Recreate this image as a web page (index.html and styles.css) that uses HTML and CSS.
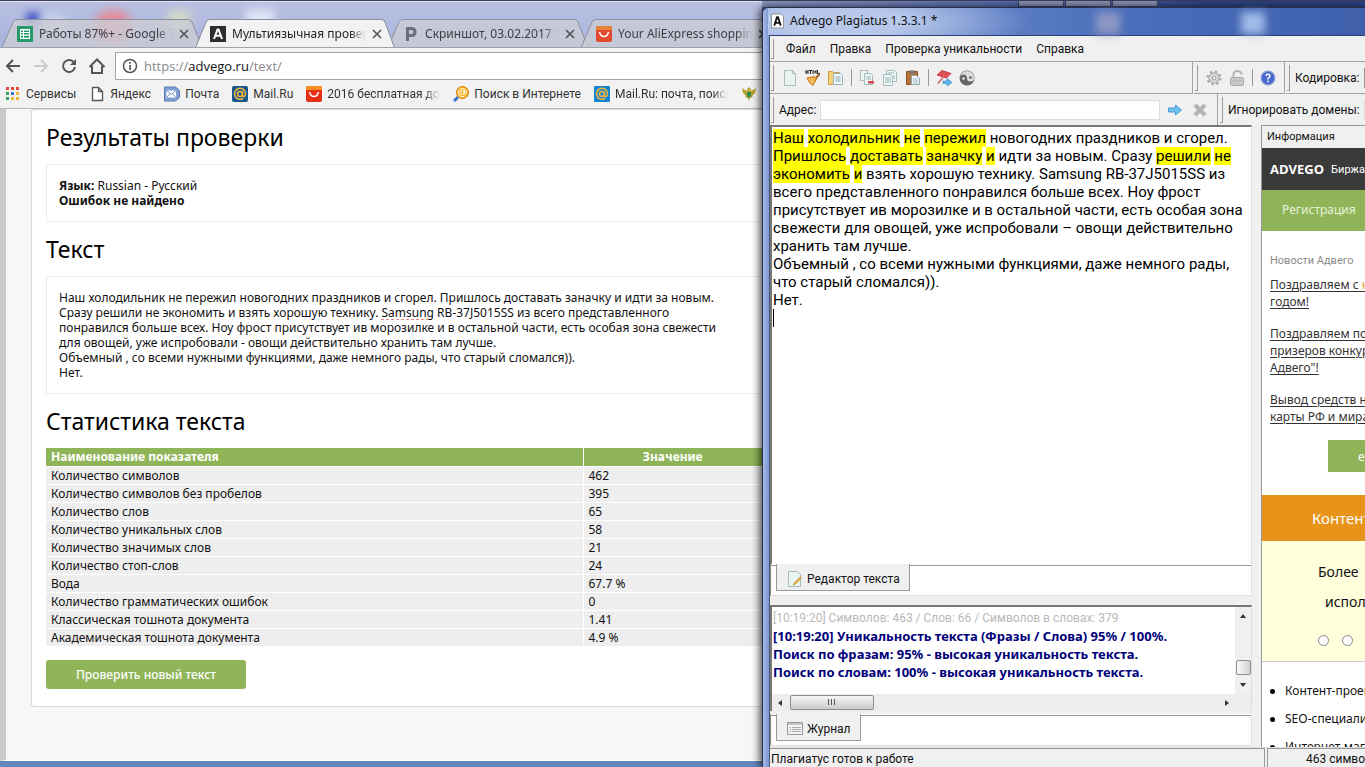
FILE: index.html
```html
<!DOCTYPE html>
<html lang="ru">
<head>
<meta charset="utf-8">
<title>Advego Plagiatus</title>
<link rel="stylesheet" href="styles.css">
</head>
<body>
<div class="desktop">
  <section class="browser">
    <div class="tabstrip">
      <i class="blob blob-blue"></i><i class="blob blob-red"></i><i class="blob blob-yellow"></i><i class="blob blob-white"></i><i class="blob blob-white2"></i>
      <div class="tab">
        <svg class="tab-shape" viewBox="0 0 200 29" preserveAspectRatio="none"><path d="M0 28.5L11 3Q12 .5 15 .5H186Q189 .5 190 3L200 28.5"/></svg>
        <svg class="ico" viewBox="0 0 16 16"><rect width="16" height="16" fill="#259b67"/><path d="M3 3h10v10H3z" fill="#fff"/><path d="M4 4.5h2v1.5H4zM7 4.5h5v1.5H7zM4 7h2v1.5H4zM7 7h5v1.5H7zM4 9.700h2v2H4zM7 9.700h5v2H7z" fill="#259b67"/></svg>
        <span class="tab-title">Работы 87%+ - Google Т</span>
        <button class="close" aria-label="Закрыть"><svg viewBox="0 0 10 10"><path d="M1 1l8 8M9 1l-8 8"/></svg></button>
      </div>
      <div class="tab active">
        <svg class="tab-shape" viewBox="0 0 200 29" preserveAspectRatio="none"><path d="M0 29L11 3Q12 .5 15 .5H186Q189 .5 190 3L200 29"/></svg>
        <svg class="ico" viewBox="0 0 16 16"><rect width="16" height="16" fill="#2d2d2d"/><path d="M4 13L7.500 3.500h1L12 13M5.500 9.800h5" fill="none" stroke="#fff" stroke-width="2"/></svg>
        <span class="tab-title">Мультиязычная провер</span>
        <button class="close" aria-label="Закрыть"><svg viewBox="0 0 10 10"><path d="M1 1l8 8M9 1l-8 8"/></svg></button>
      </div>
      <div class="tab">
        <svg class="tab-shape" viewBox="0 0 200 29" preserveAspectRatio="none"><path d="M0 28.5L11 3Q12 .5 15 .5H186Q189 .5 190 3L200 28.5"/></svg>
        <svg class="ico" viewBox="0 0 16 16"><path d="M4.500 15V2.500h4q3.500 0 3.500 3.500t-3.500 3.500h-4" fill="none" stroke="#6b6e78" stroke-width="3"/></svg>
        <span class="tab-title">Скриншот, 03.02.2017 10</span>
        <button class="close" aria-label="Закрыть"><svg viewBox="0 0 10 10"><path d="M1 1l8 8M9 1l-8 8"/></svg></button>
      </div>
      <div class="tab">
        <svg class="tab-shape" viewBox="0 0 200 29" preserveAspectRatio="none"><path d="M0 28.5L11 3Q12 .5 15 .5H186Q189 .5 190 3L200 28.5"/></svg>
        <svg class="ico" viewBox="0 0 16 16"><rect width="16" height="16" rx="2" fill="#e2492f"/><path d="M0 4V2q0-2 2-2h12q2 0 2 2v2z" fill="#e8843a"/><path d="M3.500 6q1 4.500 4.500 4.500T12.500 6" fill="none" stroke="#fff" stroke-width="1.500"/></svg>
        <span class="tab-title">Your AliExpress shopping</span>
        <button class="close" aria-label="Закрыть"><svg viewBox="0 0 10 10"><path d="M1 1l8 8M9 1l-8 8"/></svg></button>
      </div>
    </div>
    <div class="navbar">
      <button aria-label="Назад"><svg viewBox="0 0 18 18"><path d="M16 9H3M9 3L3 9l6 6" class="ln"/></svg></button>
      <button aria-label="Вперёд" class="off"><svg viewBox="0 0 18 18"><path d="M2 9h13M9 3l6 6-6 6" class="ln"/></svg></button>
      <button aria-label="Обновить"><svg viewBox="0 0 18 18"><path d="M14 5.500A6 6 0 1 0 15 10" class="ln"/><path d="M16 2v6h-6z" fill="#555"/></svg></button>
      <button aria-label="Домой"><svg viewBox="0 0 18 18"><path d="M1.500 10L9 2.500l7.500 7.500M4 9v7h10V9" class="ln"/></svg></button>
      <label class="omnibox">
        <svg viewBox="0 0 16 16"><circle cx="8" cy="8" r="6.500" fill="none" stroke="#555" stroke-width="1.500"/><path d="M7.200 7h1.700v5H7.200zM7.200 4h1.700v1.800H7.200z" fill="#555"/></svg>
        <span class="url">https://<b>advego.ru</b>/text/</span>
      </label>
    </div>
    <nav class="bookmarks">
      <a href="#"><svg viewBox="0 0 16 16"><path d="M1 1h3v3H1zM6 1h3v3H6zM11 1h3v3h-3z" fill="#df4b3c"/><path d="M1 6h3v3H1z" fill="#35a15a"/><path d="M6 6h3v3H6z" fill="#3b79d8"/><path d="M11 6h3v3h-3zM6 11h3v3H6zM11 11h3v3h-3z" fill="#f0b72f"/><path d="M1 11h3v3H1z" fill="#35a15a"/></svg><span>Сервисы</span></a>
      <a href="#"><svg viewBox="0 0 16 16"><path d="M3.500 1.500h6l4 4v9h-10zM9.500 1.500v4h4" fill="#fff" stroke="#555" stroke-width="1.300"/></svg><span>Яндекс</span></a>
      <a href="#"><svg viewBox="0 0 16 16"><path d="M.5 1h11l4 3.500v7L11.500 15H.5z" fill="#829fd4" stroke="#5a79b5"/><path d="M2.500 4.500h9.500v7H2.500z" fill="#fff"/><path d="M2.500 4.500l4.700 4 4.800-4M2.500 11.500l3.500-4M12 11.500l-3.500-4" fill="none" stroke="#7590c4"/></svg><span>Почта</span></a>
      <a href="#"><svg viewBox="0 0 16 16"><rect width="16" height="16" rx="2" fill="#17598f"/><circle cx="8" cy="8" r="2.500" class="at"/><path d="M10.500 5.500v4q.3 1.700 1.800 1 1.500-1.200 1.200-3.500A5.500 5.500 0 1 0 11 12.500" class="at"/></svg><span>Mail.Ru</span></a>
      <a href="#" class="fade"><svg viewBox="0 0 16 16"><rect width="16" height="16" rx="2" fill="#e62e14"/><path d="M0 4V2q0-2 2-2h12q2 0 2 2v2z" fill="#f5901f"/><path d="M3.500 6q1 4.500 4.500 4.500T12.500 6" fill="none" stroke="#fff" stroke-width="1.500"/></svg><span>2016 бесплатная дос</span></a>
      <a href="#"><svg viewBox="0 0 16 16"><path d="M1 15l4-4" stroke="#3574c8" stroke-width="3"/><circle cx="9.500" cy="6.500" r="6" fill="#fbb424" stroke="#d07c0c"/><circle cx="9.500" cy="6.500" r="1.800" fill="none" stroke="#fff"/><path d="M11.300 4.500v3q1.200 1.500 2 0A4 4 0 1 0 11.500 10" fill="none" stroke="#fff"/></svg><span>Поиск в Интернете</span></a>
      <a href="#" class="fade"><svg viewBox="0 0 16 16"><rect width="16" height="16" rx="1" fill="#1585d0"/><circle cx="8" cy="8" r="2.500" class="at"/><path d="M10.500 5.500v4q.3 1.700 1.800 1 1.500-1.200 1.200-3.500A5.500 5.500 0 1 0 11 12.500" class="at"/></svg><span>Mail.Ru: почта, поиск</span></a>
      <a href="#" aria-label="Госуслуги"><svg viewBox="0 0 16 16"><path d="M8 1l2 2-1 2 3-1 3-2-1 5-3 3 1 1-3 1-1 3-1-3-3-1 1-1-3-3L1 2l3 2 3 1-1-2z" fill="#b8a12a"/><path d="M6 6h4v4l-2 2-2-2z" fill="#2e8a4f"/></svg></a>
    </nav>
    <main class="page">
      <div class="card">
        <h1>Результаты проверки</h1>
        <div class="box"><p><b>Язык:</b> Russian - Русский<br><b>Ошибок не найдено</b></p></div>
        <h2>Текст</h2>
        <div class="box"><p>Наш холодильник не пережил новогодних праздников и сгорел. Пришлось доставать заначку и идти за новым.<br>Сразу решили не экономить и взять хорошую технику. <span class="spell">Samsung</span> RB-37J5015SS из всего представленного<br>понравился больше всех. Ноу фрост присутствует ив морозилке и в остальной части, есть особая зона свежести<br>для овощей, уже испробовали - овощи действительно хранить там лучше.<br>Объемный , со всеми нужными функциями, даже немного рады, что старый сломался)).<br>Нет.</p></div>
        <h2>Статистика текста</h2>
        <table>
          <thead><tr><th>Наименование показателя</th><th>Значение</th></tr></thead>
          <tbody>
          <tr><td>Количество символов</td><td>462</td></tr>
          <tr><td>Количество символов без пробелов</td><td>395</td></tr>
          <tr><td>Количество слов</td><td>65</td></tr>
          <tr><td>Количество уникальных слов</td><td>58</td></tr>
          <tr><td>Количество значимых слов</td><td>21</td></tr>
          <tr><td>Количество стоп-слов</td><td>24</td></tr>
          <tr><td>Вода</td><td>67.7 %</td></tr>
          <tr><td>Количество грамматических ошибок</td><td>0</td></tr>
          <tr><td>Классическая тошнота документа</td><td>1.41</td></tr>
          <tr><td>Академическая тошнота документа</td><td>4.9 %</td></tr>
          </tbody>
        </table>
        <button class="primary">Проверить новый текст</button>
      </div>
    </main>
  </section>

  <div class="side">
    <div class="caption"><span class="cap-buttons"><i></i><i></i><i></i></span></div>
    <section class="app">
      <header class="titlebar">
        <svg viewBox="0 0 14 16"><path d="M.5.5h10l3 3v12H.5z" fill="#fff" stroke="#888"/><path d="M3.500 13L6.500 4h1L10.500 13M5 10h4" fill="none" stroke="#111" stroke-width="2"/></svg>
        <span>Advego Plagiatus 1.3.3.1 *</span>
        <i class="glow glow-mid"></i><i class="glow"></i>
      </header>
      <div class="client">
        <nav class="menu"><i class="grip"></i><button>Файл</button><button>Правка</button><button>Проверка уникальности</button><button>Справка</button></nav>
        <div class="bar tools">
          <div class="group grow"><i class="grip"></i>
            <button aria-label="Новый"><svg viewBox="0 0 16 16"><path d="M2.500.5h8l3 3v12h-11z" fill="#eaf3f2" stroke="#a8bcbb"/><path d="M10.500.5v3h3" fill="none" stroke="#a8bcbb"/></svg></button>
            <button aria-label="Очистить HTML"><svg viewBox="0 0 16 16"><path d="M1 0v4M3 0v4M1 2h2M4 .5h3M5.500 0v4M8 4V.5l1.500 2L11 .5V4M12.500 0v3.500H15" fill="none" stroke="#222"/><path d="M14.500 4l-4 4.500" stroke="#a5682a" stroke-width="2"/><path d="M2 8l7-1.500 2.500 2.500L8 15.500Q3.500 13 2 8z" fill="#f0a73c" stroke="#c77f22"/><path d="M4 9l4 5M6.500 8l2 5" stroke="#f8d08a"/></svg></button>
            <button aria-label="Открыть"><svg viewBox="0 0 16 16"><path d="M.5 1.500h4l1 1h6v12H.5z" fill="#f4cf7c" stroke="#d0a040"/><path d="M5.500 3.500h7l2 2v9h-9z" fill="#f0f7fa" stroke="#9cb4bb"/><path d="M7.500 7h5M7.500 9h5M7.500 11h5" stroke="#8aa8b0"/></svg></button>
            <i class="sep"></i>
            <button aria-label="Вырезать"><svg viewBox="0 0 16 16"><path d="M1.500.5h7v10h-7z" fill="#eef6f6" stroke="#a5babb"/><path d="M5.500 3.500h6l2 2v9h-8z" fill="#eef6f6" stroke="#a5babb"/><path d="M7 7h5M7 9h5" stroke="#9bb5b8"/><path d="M9 11h6v2.500H9z" fill="#d7434f"/></svg></button>
            <button aria-label="Копировать"><svg viewBox="0 0 16 16"><path d="M4.500.5h8l2 2v9h-10z" fill="#eef6f6" stroke="#a5babb"/><path d="M1.500 4.500h7l2 2v9h-9z" fill="#eef6f6" stroke="#a5babb"/><path d="M3 8h6M3 10h6M3 12h6M6 3h6M11 6h2M11 8h2" stroke="#9bb5b8"/></svg></button>
            <button aria-label="Вставить"><svg viewBox="0 0 16 16"><path d="M1.500 1.500h11v13h-11z" fill="#b5733a" stroke="#8c5426"/><path d="M4 .5h6v3H4z" fill="#777"/><path d="M6.500 5.500h5l3 3v6h-8z" fill="#eef6fa" stroke="#8fa9b0"/><path d="M8 9h5M8 11h5M8 13h5" stroke="#a9bfc5"/></svg></button>
            <i class="sep"></i>
            <button aria-label="Проверка"><svg viewBox="0 0 16 16"><path d="M1 5L6 .5l9 3-4.500 4.500z" fill="#e0525a" stroke="#c9434d"/><path d="M8 6l-6 7.500" stroke="#d8626a" stroke-width="1.500"/><path d="M7 11h4V8.500l5 4-5 3.500v-2.500H7z" fill="#5eb5ea" stroke="#3a8bc4" stroke-width=".7"/></svg></button>
            <button aria-label="Уникальность"><svg viewBox="0 0 16 16"><circle cx="8" cy="8" r="7.500" fill="#666"/><path d="M1 8A7 7 0 0 1 15 8 3.500 3.500 0 0 1 8 8 3.500 3.500 0 0 0 1 8z" fill="#dedede"/><circle cx="11.500" cy="7.500" r="1.200" fill="#555"/><circle cx="4.500" cy="8.500" r="1.200" fill="#eee"/></svg></button>
          </div>
          <div class="group g2"><i class="grip"></i>
            <button aria-label="Настройки"><svg viewBox="0 0 16 16"><circle cx="8" cy="8" r="5" fill="#ddd" stroke="#b2b2b2" stroke-width="1.500"/><circle cx="8" cy="8" r="6.500" fill="none" stroke="#aaa" stroke-width="2" stroke-dasharray="2.500 2.600"/><circle cx="8" cy="8" r="2" fill="#eee" stroke="#999"/></svg></button>
            <button aria-label="Замок"><svg viewBox="0 0 16 16"><path d="M4.500 7V4.500q0-3.500 4-3.500t4 3.500" fill="none" stroke="#b5b5b5" stroke-width="2"/><rect x="1.500" y="7.500" width="13" height="8" rx="1" fill="#c8c8c8" stroke="#a8a8a8"/><path d="M3 11h10" stroke="#b2b2b2"/></svg></button>
            <i class="sep"></i>
            <button aria-label="Помощь"><svg viewBox="0 0 16 16"><circle cx="8" cy="8" r="6.800" fill="#4668cf" stroke="#8b9ad6" stroke-width="1.200"/><path d="M6 6q.2-1.800 2-1.800T10 6Q9.900 7 8 8.300V9.500M8 10.500v1.700" fill="none" stroke="#fff" stroke-width="1.500"/></svg></button>
          </div>
          <div class="group g3"><i class="grip"></i><label for="enc">Кодировка:</label><input id="enc" class="edge"></div>
        </div>
        <div class="bar address">
          <div class="group grow"><i class="grip"></i><label for="addr">Адрес:</label><input id="addr" class="addr">
            <button aria-label="Перейти"><svg viewBox="0 0 16 16"><path d="M1.500 6h7V3l6 5-6 5v-3h-7z" fill="#6fc0ee" stroke="#4c9bd0"/></svg></button>
            <button aria-label="Стоп"><svg viewBox="0 0 16 16"><path d="M3 3l10 10M13 3L3 13" stroke="#b3b3b3" stroke-width="4"/></svg></button>
          </div>
          <div class="group g4"><i class="grip"></i><label for="ign">Игнорировать домены:</label><input id="ign" class="edge"></div>
        </div>
        <div class="work">
          <div class="left">
            <div class="editor" role="textbox" aria-label="Редактор текста"><mark>Наш</mark> <mark>холодильник</mark> <mark>не</mark> <mark>пережил</mark> новогодних праздников и сгорел.<br><mark>Пришлось</mark> <mark>доставать</mark> <mark>заначку</mark> <mark>и</mark> идти за новым. Сразу <mark>решили</mark> <mark>не</mark><br><mark>экономить</mark> <mark>и</mark> взять хорошую технику. Samsung RB-37J5015SS из<br>всего представленного понравился больше всех. Ноу фрост<br>присутствует ив морозилке и в остальной части, есть особая зона<br>свежести для овощей, уже испробовали – овощи действительно<br>хранить там лучше.<br>Объемный , со всеми нужными функциями, даже немного рады,<br>что старый сломался)).<br>Нет.<br><i class="caret"></i></div>
            <div class="tabs"><button class="wtab"><svg viewBox="0 0 16 16"><path d="M1.500.5h9l3 3v12h-12z" fill="#eaf4f2" stroke="#a5bcbb"/><path d="M14.500 7l-6 6-2 1 .8-2.200 6-6z" fill="#f3c04a" stroke="#b98023" stroke-width=".7"/></svg>Редактор текста</button></div>
            <div class="log">
              <div class="log-body">
                <div class="log-text"><p class="muted">[10:19:20] Символов: 463 / Слов: 66 / Символов в словах: 379</p><p>[10:19:20] Уникальность текста (Фразы / Слова) 95% / 100%.</p><p>Поиск по фразам: 95% - высокая уникальность текста.</p><p>Поиск по словам: 100% - высокая уникальность текста.</p></div>
                <div class="vscroll"><i class="tri up"></i><i class="vthumb"></i><i class="tri down"></i></div>
              </div>
              <div class="hscroll"><i class="tri prev"></i><i class="hthumb"></i><i class="tri next"></i></div>
            </div>
            <div class="tabs log-tabs"><button class="wtab"><svg viewBox="0 0 16 16"><rect x=".5" y="1.500" width="15" height="12" fill="#f4f4f4" stroke="#9a9a9a"/><path d="M1 3h14" stroke="#c4c4c4" stroke-width="2"/><path d="M5 6.500h9M5 8.500h9M5 10.500h9M2.500 6.500H4M2.500 8.500H4M2.500 10.500H4" stroke="#aaa"/></svg>Журнал</button></div>
          </div>
          <aside class="info">
            <h3>Информация</h3>
            <div class="brand"><strong>ADVEGO</strong><span>Биржа</span></div>
            <a href="#" class="reg">Регистрация</a>
            <div class="news">
              <h4>Новости Адвего</h4>
              <a href="#">Поздравляем с <em>н</em>овым<br>годом!</a>
              <a href="#">Поздравляем победителей<br>призеров конкурса<br>Адвего"!</a>
              <a href="#">Вывод средств на<br>карты РФ и мира</a>
              <div class="more-row"><button class="more">еще</button></div>
            </div>
            <div class="orange">Контент</div>
            <div class="cream"><p>Более</p><p>исполнителей</p>
              <div class="radios"><input type="radio" name="s" aria-label="Слайд 1"><input type="radio" name="s" aria-label="Слайд 2"></div></div>
            <ul><li>Контент-проекты</li><li>SEO-специалисты</li><li>Интернет-магазины</li></ul>
          </aside>
        </div>
        <footer class="status"><span class="st-main">Плагиатус готов к работе</span><span class="st-count">463 символов</span></footer>
      </div>
    </section>
  </div>
</div>
</body>
</html>
```
FILE: styles.css
```css
* { box-sizing: border-box; }
body { margin: 0; font-family: Roboto, "Noto Sans", sans-serif; font-size: 12px; color: #111; overflow: hidden; }
button { font: inherit; color: inherit; border: 0; background: none; padding: 0; }
input { font: inherit; margin: 0; }
a { color: inherit; text-decoration: none; }
p, h1, h2, h3, h4, ul { margin: 0; padding: 0; }
h1, h2, h3, h4 { font-weight: normal; }
i { font-style: normal; }
svg { display: block; flex: none; }

.desktop { display: grid; grid-template-columns: minmax(0, 762fr) minmax(0, 603fr); height: 100vh; background: #4a63a4; overflow: hidden; }

/* Browser */
.browser { display: flex; flex-direction: column; min-width: 0; overflow: hidden; background: #f2f2f2; border-bottom: 6px solid #6288c0; }
.tabstrip { position: relative; display: flex; flex: none; height: 48px; padding: 19px 0 0 2px; background: linear-gradient(#b9c0e2, #a9b4dc); border-top: 1px solid #3c3e58; border-bottom: 1px solid #a0a2aa; box-shadow: inset 0 1px #e5e6f4; overflow: hidden; }
.blob { position: absolute; filter: blur(5px); }
.blob-blue { left: 27px; top: 12px; width: 12px; height: 12px; background: #2036c0; }
.blob-red { left: 94px; top: 9px; width: 38px; height: 34px; border-radius: 50%; background: #e58a96; }
.blob-yellow { left: 168px; top: 10px; width: 22px; height: 20px; background: #d6dcc4; }
.blob-white { left: 246px; top: 8px; width: 28px; height: 22px; background: #dfe6f5; }
.blob-white2 { left: 42px; top: 14px; width: 22px; height: 20px; background: #d0d8f0; }
.tab { position: relative; display: flex; align-items: center; flex: none; width: 193px; height: 29px; padding-left: 15px; margin-top: -1px; color: #3d3d44; }
.tab .ico { position: relative; width: 16px; height: 16px; }
.tab-shape { position: absolute; left: 0; top: 0; width: 200px; height: 29px; }
.tab-shape path { fill: rgba(203, 204, 212, .82); stroke: #8c8f9c; }
.tab.active { z-index: 1; color: #222; }
.tab.active .tab-shape { height: 30px; }
.tab.active .tab-shape path { fill: #f2f2f2; }
.tab-title { position: relative; width: 134px; margin-left: 6px; font-family: "Noto Sans", sans-serif; font-size: 12px; white-space: nowrap; overflow: hidden; -webkit-mask-image: linear-gradient(90deg, #000 88%, transparent); mask-image: linear-gradient(90deg, #000 88%, transparent); }
.close { position: relative; margin-left: 6px; }
.close svg { width: 10px; height: 10px; }
.close path { stroke: #505258; stroke-width: 1.6; }
.navbar { display: flex; align-items: center; flex: none; height: 36px; padding: 0 0 0 4px; gap: 10px; }
.navbar svg { width: 18px; height: 18px; }
.navbar .ln { fill: none; stroke: #555; stroke-width: 2; }
.navbar .off { opacity: .25; }
.omnibox { display: flex; align-items: center; flex: 1; height: 28px; padding-left: 6px; margin-left: -1px; gap: 6px; background: #fff; border: 1px solid #a5a5a5; border-right: 0; border-radius: 2px 0 0 2px; font-family: "Open Sans", sans-serif; font-size: 13px; color: #888; }
.omnibox svg { width: 16px; height: 16px; }
.omnibox b { font-weight: normal; color: #111; }
.bookmarks { display: flex; align-items: center; flex: none; height: 25px; padding: 0 0 5px 5px; gap: 13px; border-bottom: 1px solid #b6b6b6; white-space: nowrap; overflow: hidden; color: #333; }
.bookmarks a { display: flex; align-items: center; flex: none; gap: 5px; }
.bookmarks svg { width: 16px; height: 16px; }
.bookmarks .at { fill: none; stroke: #f5b43a; stroke-width: 1.5; }
.bookmarks .fade { width: 134px; overflow: hidden; -webkit-mask-image: linear-gradient(90deg, #000 88%, transparent); mask-image: linear-gradient(90deg, #000 88%, transparent); }
.page { flex: 1; min-height: 0; overflow: hidden; padding: 0 0 0 25px; background: #f7f7f7; border-left: 6px solid #cacaca; border-bottom: 1px solid #fff; }
.card { padding: 13px 0 17px 14px; background: #fff; border: 1px solid #d8d8d8; border-right: 0; border-radius: 3px 0 0 3px; font-family: "Noto Sans", sans-serif; line-height: 15px; }
h1, h2 { font-size: 23px; line-height: 28px; color: #000; }
.box { margin: 13px 0; padding: 13px 12px; border: 1px solid #ececec; border-right: 0; white-space: nowrap; }
.spell { text-decoration-line: underline; text-decoration-style: dashed; text-decoration-color: #e48a8a; text-underline-offset: 2px; }
table { width: 100%; margin: 13px 0 0; border-collapse: collapse; table-layout: fixed; }
th, td { height: 18px; padding: 0 5px; text-align: left; line-height: 17px; border-bottom: 1px solid #fff; background: #eee; }
th { background: #8fb558; color: #fff; }
th:first-child { width: 75%; }
th + th { text-align: center; }
th + th, td + td { border-left: 1px solid #fff; }
.primary { display: block; width: 200px; height: 29px; margin-top: 13px; border-radius: 3px; background: #8fb558; color: #fff; font-weight: 500; }

/* Plagiatus window */
.side { display: flex; flex-direction: column; position: relative; z-index: 1; min-width: 0; min-height: 0; }
.caption { flex: none; height: 7px; padding-left: 256px; border-top: 1px solid #3c3e58; background: linear-gradient(90deg, #8c96c4, #4a62a8 50%, #2c4387 75%); }
.cap-buttons { display: flex; gap: 1px; width: 140px; height: 6px; }
.cap-buttons i { flex: 1; background: #8a93b5; border: 1px solid #3d4568; border-top: 0; }
.app { display: flex; flex-direction: column; flex: 1; min-height: 0; border-left: 1px solid #26304c; border-top: 1px solid #26304c; border-radius: 6px 0 0 0; background: linear-gradient(90deg, #a9bce6, #7f9bd6 5px, #4b6ebb 60%, #3f5fab); box-shadow: -2px 0 9px rgba(0, 0, 0, .75); padding-left: 6px; }
.titlebar { position: relative; display: flex; align-items: center; flex: none; gap: 6px; height: 27px; padding: 0 0 2px 3px; margin-left: -1px; background: radial-gradient(ellipse 190px 40px at 70px 14px, #b7c8ea 35%, transparent); font-family: "Noto Sans", sans-serif; }
.titlebar svg { width: 13px; height: 16px; }
.glow { position: absolute; right: 100px; top: 4px; width: 24px; height: 22px; background: #9fbbe8; filter: blur(4px); }
.glow-mid { right: 245px; background: #8e97c4; }
.client { display: flex; flex-direction: column; flex: 1; min-height: 0; border-left: 1px solid #49546f; border-top: 1px solid #2c3f75; background: #f0f0f0; }
.grip { flex: none; align-self: stretch; width: 3px; margin: 3px 0 2px; border-right: 1px solid #9a9a9a; border-bottom: 1px solid #9a9a9a; }
.menu { display: flex; align-items: center; flex: none; height: 26px; padding-left: 1px; border-bottom: 1px solid #a3a3a3; white-space: nowrap; }
.menu button { margin-left: 14px; }
.menu .grip + button { margin-left: 12px; }
.bar { display: flex; flex: none; height: 32px; white-space: nowrap; overflow: hidden; }
.bar.address { height: 31px; }
.group { display: flex; align-items: center; flex: none; overflow: hidden; padding-left: 1px; border-bottom: 1px solid #a3a3a3; border-right: 1px solid #a3a3a3; margin-right: 1px; }
.address .group { border-bottom: 0; }
.bar .grow { flex: 1; min-width: 0; }
.bar svg { width: 16px; height: 16px; }
.tools button { margin-left: 7px; }
.tools .grip + button { margin-left: 8px; }
.sep { width: 1px; height: 17px; margin-left: 7px; background: #999; flex: none; }
.g2 { width: 91px; }
.bar .g3 { width: 79px; border-right: 0; margin: 0; }
.bar .g4 { width: 146px; border-right: 0; margin: 0; }
.bar label { margin-left: 5px; }
.edge { flex: none; width: 40px; height: 20px; margin-left: 4px; border: 1px solid #999; }
.address .edge { border-color: #dcdcdc; }
.addr { flex: 1; min-width: 0; height: 20px; margin-left: 4px; border: 1px solid #dcdcdc; background: #fff; }
.address button { margin-left: 7px; }
.address button + button { margin: 0 9px; }
.work { display: grid; grid-template-columns: minmax(0, 1fr) 104px; column-gap: 9px; flex: 1; min-height: 0; }
.left { display: flex; flex-direction: column; min-width: 0; min-height: 0; }
.editor { flex: 1; min-height: 0; padding: 2px 1px; background: #fff; border-top: 2px solid #777; border-left: 2px solid #777; border-right: 1px solid #ddd; font-size: 15px; line-height: 18px; white-space: nowrap; overflow: hidden; color: #000; }
mark { display: inline-block; height: 18px; background: #ff0; color: inherit; }
.caret { display: inline-block; width: 1px; height: 18px; background: #000; }
.tabs { flex: none; height: 32px; padding-left: 5px; background: linear-gradient(#9a9a9a, #9a9a9a) 0 1px / 100% 1px no-repeat #fff; border-bottom: 1px solid #ddd; border-left: 1px solid #888; border-right: 1px solid #ddd; }
.wtab { display: flex; align-items: center; height: 27px; gap: 4px; padding: 3px 9px 0 10px; background: #f0f0f0; border: 1px solid #999; border-top: 0; }
.wtab svg { width: 16px; height: 16px; }
.log { flex: none; margin-top: 9px; height: 106px; display: flex; flex-direction: column; background: #fff; border-top: 2px solid #777; border-left: 2px solid #777; border-right: 1px solid #ddd; }
.log-body { display: flex; flex: 1; min-height: 0; }
.log-text { flex: 1; min-width: 0; padding: 3px 1px; font-family: "Noto Sans", sans-serif; font-size: 13px; line-height: 18px; font-weight: bold; color: #00007a; white-space: nowrap; overflow: hidden; }
.muted { font-family: Roboto, sans-serif; font-size: 12px; font-weight: normal; color: #b9b9b9; line-height: 17px; }
.vscroll { display: flex; flex-direction: column; align-items: center; flex: none; width: 16px; padding: 7px 0; background: #f0f0f0; }
.vthumb { width: 15px; height: 15px; margin: auto 0 8px; background: linear-gradient(90deg, #fafafa, #d2d2d6); border: 1px solid #8f8f8f; border-radius: 2px; }
.hscroll { display: flex; align-items: center; flex: none; height: 17px; padding: 0 22px 0 6px; background: #ededed; }
.hthumb { width: 84px; height: 15px; margin: 0 auto 0 8px; background: linear-gradient(90deg, transparent 37px, #555 37px 38px, transparent 38px 40px, #555 40px 41px, transparent 41px 43px, #555 43px 44px, transparent 44px) 0 3px / 100% 6px no-repeat, linear-gradient(#f6f6f6, #cacacd); border: 1px solid #8f8f8f; border-radius: 2px; }
.tri { border: 3px solid transparent; }
.up { border-top: 0; border-bottom: 4px solid #333; }
.down { border-bottom: 0; border-top: 4px solid #333; }
.prev { border-left: 0; border-right: 4px solid #333; }
.next { border-right: 0; border-left: 4px solid #333; }
.log-tabs { margin-top: 3px; margin-bottom: 1px; }
.info { min-width: 0; overflow: hidden; background: #fff; border-left: 1px solid #999; border-top: 1px solid #999; white-space: nowrap; font-family: "Noto Sans", sans-serif; }
.info h3 { height: 22px; padding-left: 5px; background: #f0f0f0; font-family: Roboto, sans-serif; font-size: 11px; line-height: 22px; }
.brand { display: flex; align-items: center; height: 42px; gap: 7px; padding-left: 8px; background: #3a3a3a; color: #fff; font-family: Roboto, sans-serif; font-size: 11px; }
.brand strong { font-family: "Open Sans", sans-serif; font-size: 13px; }
.reg { display: block; height: 41px; padding-left: 20px; background: #8fb558; color: #e9f2dc; line-height: 40px; }
.news { padding: 21px 0 23px 8px; color: #333; line-height: 17px; }
.news h4 { font-family: Roboto, sans-serif; font-size: 11px; line-height: 18px; margin-bottom: 6px; color: #8a8a8a; }
.news a { display: block; margin-bottom: 15px; text-decoration: underline; text-underline-offset: 2px; }
.news em { font-style: normal; color: #f0a030; }
.more-row { padding-left: 58px; }
.more { display: block; width: 100px; height: 32px; padding-left: 30px; text-align: left; background: #8fb558; color: #fff; }
.orange { height: 46px; padding-left: 50px; background: #e8931a; color: #fff; font-size: 15px; line-height: 46px; }
.cream { height: 121px; padding: 16px 0 0 56px; background: #ffffdb; border-bottom: 1px solid #ccc; font-size: 14px; line-height: 30px; }
.cream p + p { padding-left: 7px; }
.radios { display: flex; gap: 13px; padding-top: 18px; }
.radios input { appearance: none; width: 11px; height: 11px; border: 1px solid #888; border-radius: 50%; background: #fff; }
.info ul { padding: 15px 0 0 23px; line-height: 28px; list-style: none; }
.info li::before { content: ""; float: left; width: 5px; height: 5px; margin: 12px 0 0 -15px; border-radius: 50%; background: #000; }
.status { display: flex; flex: none; height: 20px; white-space: nowrap; border-top: 1px solid #ddd; overflow: hidden; }
.status span { border-top: 1px solid #999; line-height: 20px; }
.status .st-main { flex: 1; padding-left: 1px; border-right: 1px solid #999; margin-right: 2px; }
.status .st-count { width: 98px; padding-left: 38px; border-left: 1px solid #999; overflow: hidden; }
```
